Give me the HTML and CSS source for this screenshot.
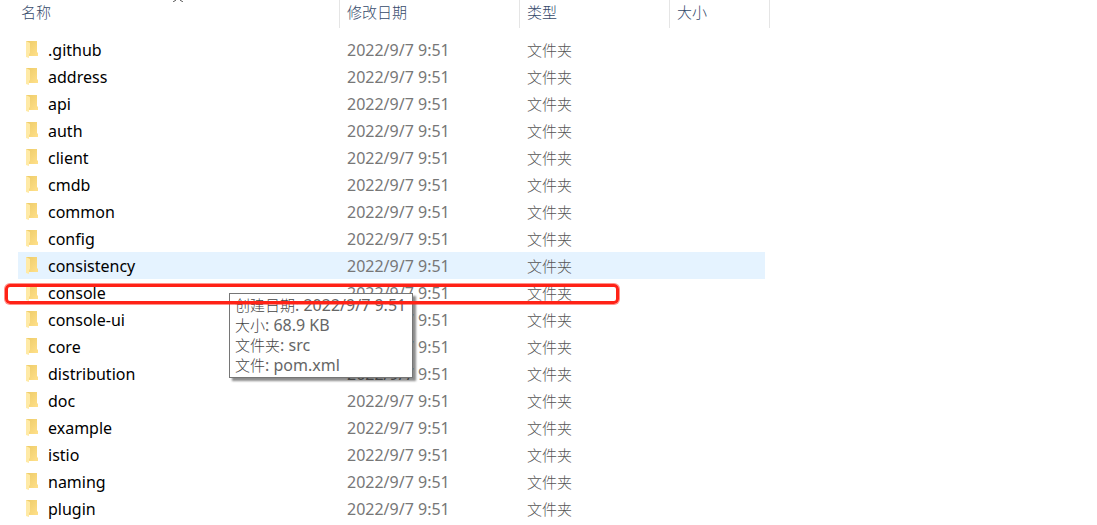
FILE: index.html
```html
<!DOCTYPE html>
<html lang="zh-CN">
<head>
  <meta charset="UTF-8">
  <meta name="viewport" content="width=device-width, initial-scale=1">
  <title>nacos</title>
  <link rel="stylesheet" href="styles.css">
</head>
<body>
  <svg class="sprite" aria-hidden="true">
    <defs>
      <linearGradient id="folder-back" x1="0" y1="0" x2="1" y2="1">
        <stop offset="0" stop-color="#edcb68"/>
        <stop offset="1" stop-color="#ffe08a"/>
      </linearGradient>
    </defs>
    <symbol id="folder" viewBox="0 0 12 18">
      <path d="M0 0H11V11L12 12V15H3L0 14Z" fill="url(#folder-back)"/>
      <path d="M0 0L4 2V12L3 13V17L0 16Z" fill="#ffeaa6"/>
    </symbol>
  </svg>

  <table class="file-list">
    <colgroup>
      <col class="col-name">
      <col class="col-date">
      <col class="col-type">
      <col class="col-size">
    </colgroup>
    <thead>
      <tr>
        <th scope="col">
          名称
          <svg class="sort-arrow" viewBox="0 0 10 2" aria-hidden="true"><path d="M3 0L0 2M7 0L10 2" fill="none" stroke="#555"/></svg>
        </th>
        <th scope="col">修改日期</th>
        <th scope="col">类型</th>
        <th scope="col">大小</th>
      </tr>
    </thead>
    <tbody>
      <tr><td class="name"><svg class="icon"><use href="#folder"/></svg>.github</td><td class="date">2022/9/7 9:51</td><td>文件夹</td><td></td></tr>
      <tr><td class="name"><svg class="icon"><use href="#folder"/></svg>address</td><td class="date">2022/9/7 9:51</td><td>文件夹</td><td></td></tr>
      <tr><td class="name"><svg class="icon"><use href="#folder"/></svg>api</td><td class="date">2022/9/7 9:51</td><td>文件夹</td><td></td></tr>
      <tr><td class="name"><svg class="icon"><use href="#folder"/></svg>auth</td><td class="date">2022/9/7 9:51</td><td>文件夹</td><td></td></tr>
      <tr><td class="name"><svg class="icon"><use href="#folder"/></svg>client</td><td class="date">2022/9/7 9:51</td><td>文件夹</td><td></td></tr>
      <tr><td class="name"><svg class="icon"><use href="#folder"/></svg>cmdb</td><td class="date">2022/9/7 9:51</td><td>文件夹</td><td></td></tr>
      <tr><td class="name"><svg class="icon"><use href="#folder"/></svg>common</td><td class="date">2022/9/7 9:51</td><td>文件夹</td><td></td></tr>
      <tr><td class="name"><svg class="icon"><use href="#folder"/></svg>config</td><td class="date">2022/9/7 9:51</td><td>文件夹</td><td></td></tr>
      <tr class="active"><td class="name"><svg class="icon"><use href="#folder"/></svg>consistency</td><td class="date">2022/9/7 9:51</td><td>文件夹</td><td></td></tr>
      <tr>
        <td class="name">
          <svg class="icon"><use href="#folder"/></svg>console
          <div class="tooltip" role="tooltip">
            <div>创建日期<span class="value">: 2022/9/7 9:51</span></div>
            <div>大小<span class="value">: 68.9 KB</span></div>
            <div>文件夹<span class="value">: src</span></div>
            <div>文件<span class="value">: pom.xml</span></div>
          </div>
          <div class="marker"></div>
        </td>
        <td class="date">2022/9/7 9:51</td><td>文件夹</td><td></td>
      </tr>
      <tr><td class="name"><svg class="icon"><use href="#folder"/></svg>console-ui</td><td class="date">2022/9/7 9:51</td><td>文件夹</td><td></td></tr>
      <tr><td class="name"><svg class="icon"><use href="#folder"/></svg>core</td><td class="date">2022/9/7 9:51</td><td>文件夹</td><td></td></tr>
      <tr><td class="name"><svg class="icon"><use href="#folder"/></svg>distribution</td><td class="date">2022/9/7 9:51</td><td>文件夹</td><td></td></tr>
      <tr><td class="name"><svg class="icon"><use href="#folder"/></svg>doc</td><td class="date">2022/9/7 9:51</td><td>文件夹</td><td></td></tr>
      <tr><td class="name"><svg class="icon"><use href="#folder"/></svg>example</td><td class="date">2022/9/7 9:51</td><td>文件夹</td><td></td></tr>
      <tr><td class="name"><svg class="icon"><use href="#folder"/></svg>istio</td><td class="date">2022/9/7 9:51</td><td>文件夹</td><td></td></tr>
      <tr><td class="name"><svg class="icon"><use href="#folder"/></svg>naming</td><td class="date">2022/9/7 9:51</td><td>文件夹</td><td></td></tr>
      <tr><td class="name"><svg class="icon"><use href="#folder"/></svg>plugin</td><td class="date">2022/9/7 9:51</td><td>文件夹</td><td></td></tr>
    </tbody>
  </table>
</body>
</html>
```
FILE: styles.css
```css
body {
  margin: 0;
  padding-left: 18px;
  background: #fff;
  color: #555;
  font-family: "Noto Sans", "Noto Sans CJK SC", sans-serif;
  font-size: 15px;
  line-height: 20px;
}

.sprite {
  position: absolute;
  width: 0;
  height: 0;
}

.file-list {
  table-layout: fixed;
  width: 0;
  border-spacing: 0;
  white-space: nowrap;
}

.col-name {
  width: 322px;
}

.col-date {
  width: 180px;
}

.col-type {
  width: 150px;
}

.col-size {
  width: 100px;
}

th {
  position: relative;
  height: 28px;
  padding: 0 7px 4px;
  box-sizing: border-box;
  border-right: 1px solid #e5e5e5;
  color: #34496a;
  font-weight: 300;
  text-align: left;
}

th:first-child {
  padding-left: 3px;
}

.sort-arrow {
  position: absolute;
  top: 0;
  left: 50%;
  width: 10px;
  height: 2px;
  margin-left: -6px;
}

/* space between the header and the first row */
tbody::before {
  content: "";
  display: block;
  height: 8px;
}

td {
  height: 27px;
  padding: 0 7px;
  box-sizing: border-box;
  font-weight: 300;
}

td:last-child {
  border-right: 5px solid transparent;
  background-clip: padding-box;
}

.active td {
  background-color: #e5f3ff;
}

.name,
.date {
  font-size: 16px;
  font-weight: 400;
}

.name {
  position: relative;
  padding-left: 8px;
  color: #000;
}

.date {
  color: #777;
}

.icon {
  width: 12px;
  height: 18px;
  margin-right: 10px;
  vertical-align: -3px;
}

.tooltip {
  position: absolute;
  top: 14px;
  left: 211px;
  z-index: 1;
  padding: 1px 6px 2px 5px;
  border: 1px solid #767676;
  background: #fff;
  box-shadow: 3px 3px 2px rgba(0, 0, 0, 0.45);
  color: #444;
  font-size: 15px;
  font-weight: 300;
}

.value {
  color: #666;
  font-size: 16px;
  font-weight: 400;
}

/* red frame round the folder that matters */
.marker {
  position: absolute;
  top: 5px;
  left: -13px;
  z-index: 2;
  width: 614px;
  height: 20px;
  box-sizing: border-box;
  border: 3px solid #ff2216;
  border-radius: 5px;
  box-shadow: 0 0 0 1px rgba(255, 34, 22, 0.5);
}
```
